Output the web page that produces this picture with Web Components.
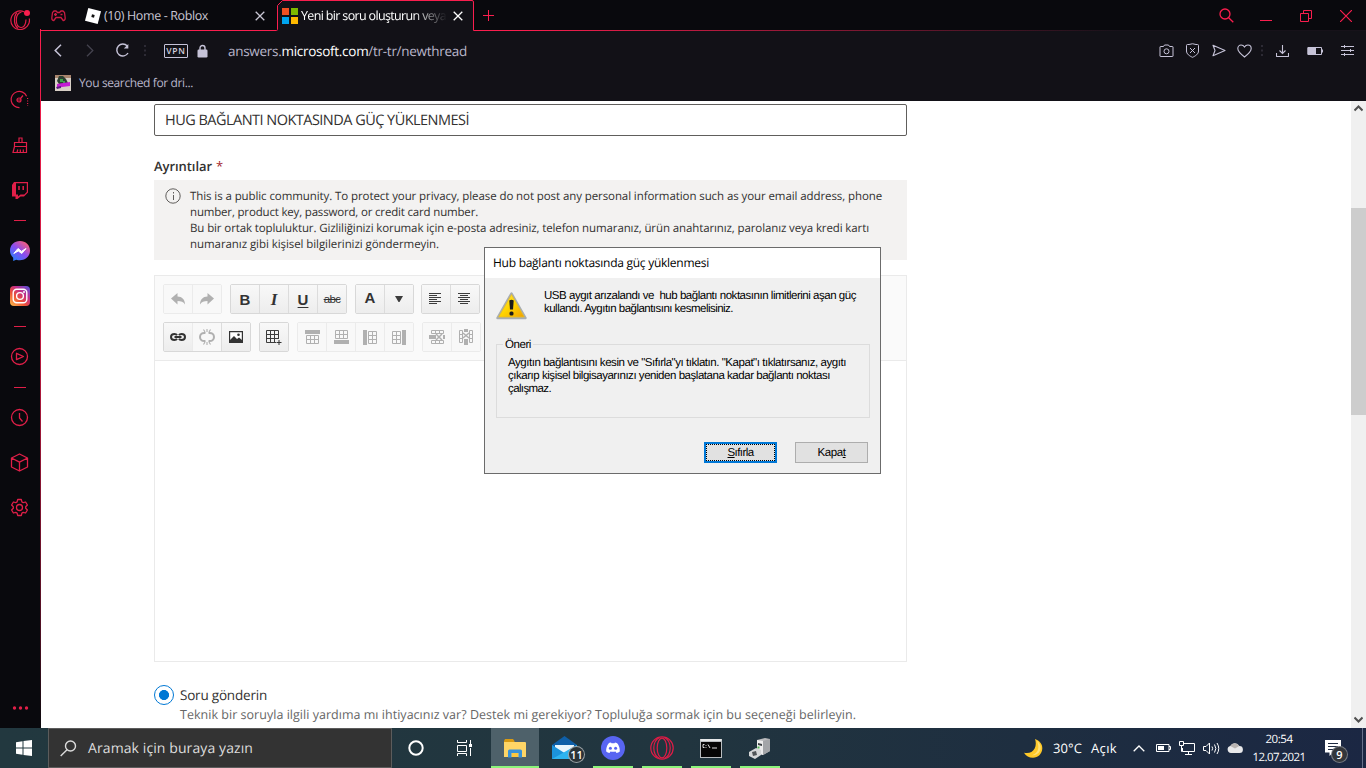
<!DOCTYPE html>
<html lang="tr">
<head>
<meta charset="utf-8">
<title>Yeni bir soru oluşturun</title>
<style>
    html, body { margin: 0; height: 100%; overflow: hidden; }
    body { font-family: "Open Sans", "Noto Sans", sans-serif; background: #fff; }
    desktop-screen { height: 768px; width: 1366px; }
</style>
</head>
<body>
<desktop-screen></desktop-screen>

<script>
// name: [width, height, markup]
const ICONS = {
    opera: [20, 20, '<g fill="none" stroke="#e01f48" stroke-width="1.2"><path d="M14 1.8A9.3 9.3 0 1 0 19.3 8.500"/><path d="M11.500 2C7.500 3 6.300 6.500 6.300 10s1.500 7 4.500 7.500c3 .3 5-2.500 5.200-8M7 2.500C4.500 5 4.300 8 4.500 11.500c.3 3.500 1.500 5.500 3.500 7"/></g><circle cx="17" cy="3" r="3" fill="#fa1e4e"/>'],
    speed: [19, 19, '<g fill="none" stroke="#e01f48" stroke-width="1.2"><path d="M16.600 6.200A8.100 8.100 0 1 0 9.500 17.600"/><path d="M17.600 8v8" stroke-dasharray="1 1.500"/><circle cx="9" cy="10" r="2"/><path d="M10.500 8.500 13 5.500M7 10h4"/></g>'],
    broom: [17, 17, '<g fill="none" stroke="#e01f48" stroke-width="1.2"><path d="M7 5V1h3v4M2.500 5.500h12v4h-12zM2.500 9.500 1 15.500h13.500v-6M5 15.500l.8-3M8.300 15.500v-3M11.300 15.500v-3"/></g>'],
    twitch: [18, 18, '<path d="M3 1h14v10.500L13 15.500H9.500L6.500 18H4.500v-2.500H1V4z" fill="#e01f48"/><path d="M5 2.200h10.800V11l-2.500 2.500H9.500L7 15.500v-2H5z" fill="#09090d"/><path d="M8 5v4M12.200 5v4" stroke="#e01f48" stroke-width="1.500"/>'],
    messenger: [20, 20, '<defs><linearGradient id="g" x1="0" y1="1" x2=".8" y2="0"><stop stop-color="#138bff"/><stop offset=".55" stop-color="#8a4cf0"/><stop offset="1" stop-color="#ff5f73"/></linearGradient></defs><path d="M10 0C4.300 0 0 4 0 9.600c0 2.900 1.200 5.400 3.200 7.100V20l3-1.300c1.200.4 2.500.5 3.800.5 5.700 0 10-4 10-9.600S15.700 0 10 0z" fill="url(#g)"/><path d="M3.800 12.500 8 7.500l3.500 2.800L16 7.500 11.800 12.500 8.300 10z" fill="#fff" stroke="#fff" stroke-linejoin="round"/>'],
    instagram: [20, 20, '<defs><linearGradient id="g" x1="0" y1="1" x2=".9" y2="0"><stop stop-color="#fdc04c"/><stop offset=".4" stop-color="#ee5136"/><stop offset=".68" stop-color="#c22e8b"/><stop offset="1" stop-color="#5b51d8"/></linearGradient></defs><rect width="20" height="20" rx="4" fill="url(#g)"/><g fill="none" stroke="#fff" stroke-width="1.400"><rect x="3.200" y="3.200" width="13.600" height="13.600" rx="3.500"/><circle cx="10" cy="10" r="3.400"/></g><circle cx="14" cy="6" r="1" fill="#fff"/>'],
    play: [19, 19, '<g fill="none" stroke="#e01f48" stroke-width="1.3" stroke-linejoin="round"><circle cx="9.500" cy="9.500" r="8"/><path d="M6.500 6.300v6.400l7-3.200z"/></g>'],
    clock: [19, 19, '<g fill="none" stroke="#e01f48" stroke-width="1.3"><circle cx="9.500" cy="9.500" r="8"/><path d="M9.500 5v5l3 3.500"/></g>'],
    cube: [19, 19, '<path d="M9.500 1 17.500 5v9L9.500 18 1.500 14V5zM1.500 5l8 4.200 8-4.200M9.500 9.200V18" fill="none" stroke="#e01f48" stroke-width="1.3" stroke-linejoin="round"/>'],
    gear: [19, 19, '<g fill="none" stroke="#e01f48" stroke-width="1.3" stroke-linejoin="round"><path d="M7.700 1.500h3.600l.6 2.400 1.300.8 2.400-.7 1.800 3-1.700 1.700v1.600l1.700 1.700-1.800 3-2.400-.7-1.300.8-.6 2.400H7.700l-.6-2.400-1.300-.8-2.400.7-1.800-3 1.700-1.700V8.700L1.600 7l1.800-3 2.400.7 1.300-.8z"/><circle cx="9.500" cy="9.500" r="3"/></g>'],
    more: [17, 4, '<g fill="#e01f48"><circle cx="2.500" cy="2" r="1.700"/><circle cx="8.500" cy="2" r="1.700"/><circle cx="14.500" cy="2" r="1.700"/></g>'],
    dash: [12, 1, '<path d="M0 .5h12" stroke="#e01f48"/>'],
    gamepad: [15, 12, '<g fill="none" stroke="#c91c43" stroke-width="1.3"><path d="M3 1h2l1.500 1.500h2L10 1h2l1.500 1.500.7 5.500c0 1.500-.7 2.500-2 2.500L10 7.500H5L2.800 10.500C1.500 10.500.8 9.500.8 8l.7-5.500z"/><path d="M3 4.500h3M4.500 3v3M9.500 4.500h2"/></g>'],
    roblox: [16, 16, '<path d="M3.300 0 16 3.300 12.700 16 0 12.700z" fill="#fff"/><path d="m7 6.300 2.700.7-.7 2.700-2.700-.7z" fill="#111"/>'],
    close: [10, 10, '<path d="M.7.7 9.300 9.300M9.300.7.7 9.300" stroke="currentColor" stroke-width="1.3"/>'],
    msflag: [16, 16, '<path d="M0 0h7v7H0z" fill="#f25022"/><path d="M9 0h7v7H9z" fill="#7fba00"/><path d="M0 9h7v7H0z" fill="#00a4ef"/><path d="M9 9h7v7H9z" fill="#ffb900"/>'],
    plus: [11, 11, '<path d="M5.500 0v11M0 5.500h11" stroke="#fa1e4e"/>'],
    search: [15, 15, '<g fill="none" stroke="#fa1e4e" stroke-width="1.3"><circle cx="6" cy="6" r="5"/><path d="m9.700 9.700 4.600 4.600"/></g>'],
    minimize: [12, 12, '<path d="M0 10.500h12" stroke="#fa1e4e"/>'],
    restore: [12, 12, '<path d="M.5 3.500h8v8h-8zM3.500 3.500v-3h8v8h-3" fill="none" stroke="#fa1e4e"/>'],
    winclose: [12, 12, '<path d="m0 0 12 12M12 0 0 12" stroke="#fa1e4e" stroke-width="1.200"/>'],
    back: [8, 13, '<path d="M7 .7 1.200 6.500 7 12.300" fill="none" stroke="#c6c3d8" stroke-width="1.5"/>'],
    forward: [8, 13, '<path d="m1 .7 5.800 5.800L1 12.300" fill="none" stroke="#45434f" stroke-width="1.3"/>'],
    reload: [15, 15, '<path d="M12.300 3A6 6 0 1 0 13 10" fill="none" stroke="#c6c3d8" stroke-width="1.4"/><path d="M13.300 1v4.500H8.800z" fill="#c6c3d8"/>'],
    dots: [2, 11, '<path d="M0 0h2v2H0zM0 4.500h2v2H0zM0 9h2v2H0z" fill="#2d2b35"/>'],
    lock: [11, 14, '<path d="M3 6V4a2.500 2.500 0 0 1 5 0v2" fill="none" stroke="#c6c3d8" stroke-width="1.400"/><rect x=".5" y="5.500" width="10" height="8" rx="1.200" fill="#c6c3d8"/>'],
    camera: [15, 14, '<g fill="none" stroke="#c6c3d8"><path d="M1.500 2.500h3l1-1.500h4l1 1.500h3q.5 0 .5.5v9q0 .5-.5.500h-12q-.5 0-.5-.5V3q0-.5.5-.5z"/><circle cx="7.500" cy="7.300" r="2.500"/></g>'],
    shield: [13, 15, '<path d="M3 1.500Q6.500 0 10 1.500h1.500q1 0 1 1V8c0 3-3 5-6 6.300C3.500 13 .5 11 .5 8V2.500q0-1 1-1zM4 5l5 5M9 5l-5 5" fill="none" stroke="#c6c3d8"/>'],
    send: [14, 13, '<path d="M1 1.200 13 6.500 1 11.800l2-5.300z" fill="none" stroke="#c6c3d8" stroke-width="1.100" stroke-linejoin="round"/>'],
    heart: [15, 14, '<path d="M7.500 13C3.500 10 .8 7.500.8 4.600.8 2.500 2.200 1 4.100 1c1.600 0 2.700.8 3.400 2 .7-1.200 1.800-2 3.400-2 1.900 0 3.300 1.500 3.300 3.600 0 2.900-2.700 5.400-6.700 8.400z" fill="none" stroke="#c6c3d8" stroke-width="1.100"/>'],
    download: [13, 12, '<path d="M.5 8v3q0 .5.5.5h11q.5 0 .5-.5V8M6.500 0v8.500M3.500 5.500l3 3 3-3" fill="none" stroke="#c6c3d8" stroke-width="1.100"/>'],
    battery: [16, 8, '<path d="M1 .5h13.500v7H1z" fill="none" stroke="#c6c3d8"/><path d="M.5.5H9v7H.5zM14.500 2.500H16v3h-1.500z" fill="#c6c3d8"/>'],
    sliders: [13, 11, '<path d="M0 1.500h13M0 5.500h13M0 9.500h13M3.500 0v3M9.500 4v3M3.500 8v3" stroke="#c6c3d8"/>'],
    favicon: [16, 16, '<path d="M0 0h16v16H0z" fill="#d8cfc6"/><path d="M0 0h16v3H0z" fill="#a9856e"/><path d="M4 1h4l3 3 2 4-3 1H4L2 6z" fill="#2b3f31"/><path d="M5 4h3v3H5zM8 6h2v2H8z" fill="#3ea34a"/><path d="M2 9l6-1 7-1v4l-8 1-5 1z" fill="#c41cd4"/><path d="M1 12l5-1v2l-4 1z" fill="#5a1f7c"/>'],
    info: [16, 16, '<circle cx="8" cy="8" r="7.200" fill="none" stroke="#605e5c"/><path d="M8.500 7v5M8.500 4v1.500" stroke="#605e5c"/>'],
    undo: [14, 12, '<path d="M0 5.500 6.500 0v3.500C11 3.500 14 6.500 14 11.500c-1.500-2.700-4-3.500-7.500-3.500v3.500z" fill="#b0b0b0"/>'],
    redo: [14, 12, '<path d="M14 5.500 7.500 0v3.500C3 3.500 0 6.500 0 11.500 1.500 8.800 4 8 7.500 8v3.500z" fill="#b0b0b0"/>'],
    caret: [8, 6, '<path d="M0 0h8L4.500 6h-1z" fill="#3c3c3c"/>'],
    left: [14, 12, '<path d="M0 .5h12M0 2.500h8M0 4.500h12M0 6.500h8M0 8.500h12M0 10.500h8" stroke="#3c3c3c"/>'],
    center: [14, 12, '<path d="M0 .5h12M2 2.500h8M0 4.500h12M2 6.500h8M0 8.500h12M2 10.500h8" stroke="#3c3c3c"/>'],
    link: [16, 8, '<g fill="none" stroke="#333" stroke-width="2"><path d="M7 2.200C6.500 1.200 5.600 1 4.500 1 2.300 1 1 2.200 1 4s1.300 3 3.500 3c1.100 0 2-.3 2.500-1.200M9 2.200c.5-1 1.400-1.200 2.500-1.200C13.700 1 15 2.200 15 4s-1.300 3-3.500 3C10.400 7 9.500 6.700 9 5.800M4.500 4h7"/></g>'],
    unlink: [16, 16, '<g fill="none" stroke="#b0b0b0" stroke-width="2"><path d="M6.500 4C3 3.500 1 5 1 8s2 4.500 5.500 4M9.500 4C13 3.500 15 5 15 8s-2 4.500-5.500 4"/><path d="M8 0v3M4.500.5 6 3M11.500.5 10 3M8 16v-3M4.500 15.500 6 13M11.500 15.500 10 13" stroke-width="1.100"/></g>'],
    image: [14, 12, '<path d="M.6.600h12.800v10.800H.6z" fill="#fff" stroke="#333" stroke-width="1.200"/><path d="M1 9l4-4 3 3 2-1.500L13 9v2H1z" fill="#333"/><circle cx="9.500" cy="3.700" r="1.300" fill="#333"/>'],
    table: [16, 15, '<path d="M.5.500h12v12H.5zM.5 4.500h12M.5 8.500h12M4.500.500v12M8.500.500v12" fill="none" stroke="#3c3c3c"/><path d="M10 9h6v6h-6z" fill="#f0f0f0"/><path d="M13 10v5M10.500 12.500h5" stroke="#333"/>'],
    rowTop: [15, 14, '<path d="M0 0h15v4H0z" fill="#b0b0b0"/><path d="M1.500 5.500h12v8h-12zM1.500 9.500h12M5.500 5.500v8M9.500 5.500v8" fill="none" stroke="#b0b0b0"/>'],
    rowBottom: [15, 14, '<path d="M0 10h15v4H0z" fill="#b0b0b0"/><path d="M1.500.5h12v8h-12zM1.500 4.500h12M5.500.5v8M9.500.5v8" fill="none" stroke="#b0b0b0"/>'],
    colLeft: [14, 15, '<path d="M0 0h4v15H0z" fill="#b0b0b0"/><path d="M5.500 1.500h8v12h-8zM5.500 5.500h8M5.500 9.500h8M9.500 1.500v12" fill="none" stroke="#b0b0b0"/>'],
    colRight: [14, 15, '<path d="M10 0h4v15h-4z" fill="#b0b0b0"/><path d="M.5 1.500h8v12h-8zM.5 5.500h8M.5 9.500h8M4.500 1.500v12" fill="none" stroke="#b0b0b0"/>'],
    rowDelete: [16, 14, '<path d="M2.500.5h12v3h-12zM6.500.5v3M10.500.5v3M2.500 10.500h12v3h-12zM6.500 10.500v3M10.500 10.500v3" fill="none" stroke="#b0b0b0"/><path d="M0 5h7v4H0zM14 5h2v4h-2z" fill="#b0b0b0"/><path d="m7 4 6 6M13 4l-6 6" stroke="#b0b0b0" stroke-width="1.500"/>'],
    colDelete: [14, 16, '<path d="M.5 1.500h3v12h-3zM.5 5.500h3M.5 9.500h3M10.500 1.500h3v12h-3zM10.500 5.500h3M10.500 9.500h3" fill="none" stroke="#b0b0b0"/><path d="M5 0h4v3H5zM5 10h4v6H5z" fill="#b0b0b0"/><path d="m4 4 6 5M10 4 4 9" stroke="#b0b0b0" stroke-width="1.500"/>'],
    warning: [31, 29, '<defs><linearGradient id="g" x1="0" y1="0" x2="1" y2="1"><stop stop-color="#ffe94a"/><stop offset=".5" stop-color="#ffd400"/><stop offset="1" stop-color="#f0a000"/></linearGradient></defs><path d="M15.500 1.500 29.500 26H1.500z" fill="#aaa" stroke="#a8adb0" stroke-width="2.500" stroke-linejoin="round"/><path d="M15.500 2.500 28.300 25H2.700z" fill="url(#g)" stroke="#e6bd2a" stroke-width=".8"/><path d="M13.300 8.500q2.200-1.500 4.400 0L17 17.500h-3z" fill="#1a1a1a"/><rect x="13.500" y="19.500" width="4" height="4" rx="1.500" fill="#1a1a1a"/>'],
    windows: [16, 16, '<path d="M0 2.200 6.500 1.300v6.200H0zM7.500 1.100 16 0v7.500H7.500zM0 8.500h6.500v6.200L0 13.800zM7.500 8.500H16V16l-8.500-1.100z" fill="#fff"/>'],
    find: [17, 17, '<g fill="none" stroke="#dcdcdc" stroke-width="1.400"><circle cx="10.500" cy="6" r="5"/><path d="M7 9.700.7 16"/></g>'],
    cortana: [16, 16, '<circle cx="8" cy="8" r="6.700" fill="none" stroke="#fff" stroke-width="2"/>'],
    taskview: [17, 16, '<g fill="none" stroke="#fff"><path d="M1.500 0v2.500h9V0M1.500 5.500h9v6h-9zM1.500 16v-2.500h9V16M14.500 0v4M14.500 8v8"/></g><path d="M13 4h3v3h-3z" fill="#fff"/>'],
    folder: [22, 19, '<path d="M0 2 1 0h8l1.500 2v4H0z" fill="#d99a12"/><path d="M0 3h21q1 0 1 1v14H0z" fill="#ffd566"/><path d="M4 18.500V12q0-1.500 1.500-1.500h11Q18 10.500 18 12v6.500h-3.500V14h-7v4.500z" fill="#3a92d8"/><path d="M8 14h6v4H8z" fill="#ffc83d"/>'],
    mail: [25, 24, '<path d="M0 9 12.500 0 25 9v4H0z" fill="#0f5fa8"/><path d="M3 9h19v8H3z" fill="#e9f5fc"/><path d="M0 9v14h25V9l-12.500 8z" fill="#1c93dc"/><path d="M0 23 25 9v14z" fill="#2eb3f0"/>'],
    discord: [24, 24, '<circle cx="12" cy="12" r="12" fill="#5865f2"/><path d="M8.500 6.800 10 6.500l.5.8h3l.5-.8 1.700.4c1.800 1.200 3.300 5 3.100 8.500-1 .9-2 1.400-3.300 1.700l-1-1.500c-1.500.3-3.500.3-5 0l-1 1.500c-1.300-.3-2.300-.8-3.300-1.700-.2-3.500 1.300-7.300 3.300-8.600z" fill="#fff"/><circle cx="9.400" cy="12.300" r="1.500" fill="#5865f2"/><circle cx="14.600" cy="12.300" r="1.500" fill="#5865f2"/>'],
    operaTask: [24, 24, '<g fill="none" stroke="#df1c46" stroke-width="1.200"><circle cx="12" cy="12" r="11.200"/><ellipse cx="12" cy="12" rx="4.800" ry="9.800"/><path d="M9.500 1.500C5.500 3.500 3.800 8 3.800 12s1.700 8.500 5.700 10.500M14.500 1.500c4 2 5.700 6.500 5.700 10.500s-1.700 8.500-5.700 10.500"/></g>'],
    cmd: [22, 19, '<path d="M0 0h22v19H0z" fill="#b9bdc0"/><path d="M.5 0h21v2H.5z" fill="#e6e8e9"/><path d="M1 3h20v15H1z" fill="#060606"/><path d="M4.500 5.500H3v3h1.500M6 6v.8M6 8v.8M8 5.500l2 3.500M12 9h5" fill="none" stroke="#ddd"/>'],
    usb: [23, 21, '<path d="M9 2 17 0l5 1v12l-7 4-6-2z" fill="#b9babc"/><path d="m9 2 6 1v14l-6-2z" fill="#ececec"/><path d="m15 3 7-2v12l-7 4z" fill="#a3a5a8"/><path d="M10 5l4 1v2l-4-1z" fill="#3c4043"/><path d="m1 14 7-4 5 2v5l-6 4-6-3z" fill="#d5d6d7"/><path d="m4 14 4-1 1 4-4 1z" fill="#505457"/><path d="M9.500 8.500h2v2h-2z" fill="#4eb54e"/>'],
    moon: [19, 19, '<path d="M11 0c4.500 1.500 7.500 5 7.300 9.500C18 15 14 18.800 9 18.800c-4 0-7-1.500-9-5 5 1 8.500-.5 10.500-4C12.300 6.500 12 3 11 0z" fill="#ffc928"/><path d="M12.500 1.500c3 2 4.500 5 4 8.500-.7 4-4.500 6.700-8.500 6.300 4-1.300 6-4 6.300-7.500.2-2.700-.5-5.300-1.800-7.300z" fill="#ffe27a"/>'],
    up: [12, 7, '<path d="m.7 6.300 5.300-5.300 5.300 5.300" fill="none" stroke="#fff" stroke-width="1.300"/>'],
    trayBattery: [15, 8, '<path d="M.5.500h12.500v7H.5zM13 2.500h1.500v3H13" fill="none" stroke="#fff"/><path d="M2 2h6v4H2z" fill="#fff"/>'],
    network: [16, 14, '<path d="M5 2.500h10.500v8H3.500V7M6 13.500h7M9.500 10.500v3M.5.500h4v4h-4zM2.500 4.500v6h1" fill="none" stroke="#fff"/>'],
    volume: [17, 13, '<g fill="none" stroke="#fff"><path d="M.5 4.500H3L6.500 1v11L3 8.500H.5zM9 4.500q1.300 2 0 4M11.500 2.500q2.700 4 0 8M14 1q3.500 5.500 0 11"/></g>'],
    cloud: [16, 10, '<path d="M4 10a3.500 3.500 0 0 1-.7-6.900A5 5 0 0 1 12.300 3 3.500 3.500 0 0 1 12.500 10z" fill="#e8e8ea"/><path d="M3.300 3.100A5 5 0 0 1 12.300 3L8 5.500z" fill="#b9b4b2"/>'],
    action: [16, 16, '<path d="M0 0h16v12.500H8L4.500 16v-3.500H0z" fill="#fff"/><path d="M3 3.500h10M3 6.500h10M3 9.500h6" stroke="#1f2b42"/>'],
    scrollUp: [9, 7, '<path d="M.5 5.500 4.500 1.500l4 4" fill="none" stroke="#505050" stroke-width="2"/>'],
    scrollDown: [9, 7, '<path d="m.5 1.500 4 4 4-4" fill="none" stroke="#505050" stroke-width="2"/>'],
};

class UiIcon extends HTMLElement {
    connectedCallback() {
        const [w, h, body] = ICONS[this.getAttribute('name')];
        const root = this.shadowRoot || this.attachShadow({ mode: 'open' });
        root.innerHTML = `
            <style>:host { display: block; flex: none; width: ${w}px; height: ${h}px; } svg { display: block; }</style>
            <svg width="${w}" height="${h}" viewBox="0 0 ${w} ${h}">${body}</svg>
        `;
    }
}
customElements.define('ui-icon', UiIcon);

// One line of text, tracked so that it fills the given width
class TextLine extends HTMLElement {
    connectedCallback() {
        const root = this.shadowRoot || this.attachShadow({ mode: 'open' });
        root.innerHTML = `
            <style>
                :host { display: block; flex: none; text-rendering: geometricPrecision; }
                span { display: inline-block; white-space: pre; vertical-align: top; }
            </style>
            <span><slot></slot></span>
        `;
        const width = Number(this.getAttribute('width'));
        if (!width) return;
        const natural = root.querySelector('span').getBoundingClientRect().width;
        this.style.letterSpacing = ((width - natural) / this.textContent.length).toFixed(3) + 'px';
        this.style.width = width + 'px';
    }
}
customElements.define('text-line', TextLine);

function define(name, html) {
    customElements.define(name, class extends HTMLElement {
        connectedCallback() {
            if (this.shadowRoot) return;
            this.attachShadow({ mode: 'open' }).innerHTML = html;
        }
    });
}

const icon = (name, margin = 0) => `<ui-icon name="${name}" style="margin-left:${margin}px"></ui-icon>`;

define('side-bar', `
    <style>
        :host {
            display: grid;
            grid-template-rows: 40px 37px 45px 47px 42px 18px 44px 45px 16px 45px 16px 45px 44px 47px 157px 40px;
            justify-items: center;
            align-items: center;
            box-sizing: border-box;
            width: 41px;
            padding-right: 1px;
            background: #09090d;
            border-right: 1px solid;
            border-image: linear-gradient(#09090d 30px, #fa1e4e 30px, #c31a41 330px, #4a1022 640px, #09090d) 1;
        }
    </style>
    ${icon('opera', 1)}<span></span>${icon('speed')}${icon('broom', 1)}${icon('twitch', 1)}${icon('dash', 1)}
    ${icon('messenger', 1)}${icon('instagram', 1)}${icon('dash', 1)}${icon('play')}${icon('dash', 1)}
    ${icon('clock')}${icon('cube')}${icon('gear')}<span></span>${icon('more', 2)}
`);

define('tab-bar', `
    <style>
        :host { display: flex; align-items: center; height: 31px; background: #09090d; position: relative; font-size: 12.5px; color: #c9c7d4; }
        .outline { position: absolute; left: 0; top: 0; }
        .tab { display: flex; align-items: center; position: relative; height: 31px; }
        .active { width: 197px; margin-left: 11px; color: #fff; }
        .active text-line { -webkit-mask: linear-gradient(90deg, #000 112px, transparent 146px); }
        .window { display: flex; align-items: center; margin-left: auto; margin-right: 14px; }
        ui-icon { position: relative; }
    </style>
    <svg class="outline" width="1325" height="31">
        <defs><linearGradient id="fade" gradientUnits="userSpaceOnUse" x1="480" y1="0" x2="1080" y2="0"><stop stop-color="#fa1e4e"/><stop offset="1" stop-color="#17121a"/></linearGradient></defs>
        <path d="M236.500 31V5.500l5-5h190.500V31z" fill="#121117"/>
        <path d="M0 30.500h235.500q1 0 1-1V5.500l5-5H431q1.500 0 1.500 1.500v28.500H1325" fill="none" stroke="url(#fade)"/>
    </svg>
    <div class="tab">
        ${icon('gamepad', 10)}${icon('roblox', 19)}
        <text-line width="104" style="margin-left:3px">(10) Home - Roblox</text-line>
        ${icon('close', 47)}
    </div>
    <div class="tab active">
        ${icon('msflag', 6)}
        <text-line width="145" style="margin-left:3px">Yeni bir soru oluşturun veya</text-line>
        ${icon('close', 7)}
    </div>
    ${icon('plus', 10)}
    <div class="window">${icon('search')}${icon('minimize', 26)}${icon('restore', 28)}${icon('winclose', 28)}</div>
`);

define('address-bar', `
    <style>
        :host { display: flex; align-items: center; height: 39px; background: #121117; color: #b9b6ca; font-size: 13.5px; }
        b { font-weight: 400; color: #fff; }
        .vpn { box-sizing: border-box; width: 24px; height: 14px; margin-left: 18px; border: 1px solid #c6c3d8; border-radius: 1px; font: 600 8.5px/12px "Open Sans", sans-serif; display: flex; justify-content: center; color: #d2d0df; letter-spacing: .7px; }
        .actions { display: flex; align-items: center; margin-left: auto; margin-right: 12px; }
    </style>
    ${icon('back', 13)}${icon('forward', 24)}${icon('reload', 21)}${icon('dots', 14)}
    <span class="vpn">VPN</span>
    ${icon('lock', 9)}
    <text-line width="239" style="margin-left:20px">answers.<b>microsoft.com</b>/tr-tr/newthread</text-line>
    <div class="actions">
        ${icon('camera')}${icon('shield', 12)}${icon('send', 13)}${icon('heart', 11)}${icon('dots', 9)}
        ${icon('download', 13)}${icon('battery', 18)}${icon('sliders', 18)}
    </div>
`);

define('bookmarks-bar', `
    <style>
        :host { display: flex; align-items: center; height: 31px; padding-bottom: 5px; box-sizing: border-box; background: #121117; color: #b9b6ca; font-size: 12px; padding-left: 14px; }
        text-line { padding-bottom: 2px; }
    </style>
    ${icon('favicon')}
    <text-line width="114" style="margin-left:8px">You searched for dri...</text-line>
`);

// Buttons of the editor; slotted content is either an icon or a letter
define('tool-button', `
    <style>
        :host { display: flex; align-items: center; justify-content: center; box-sizing: border-box; width: 29px; height: 28px; background: linear-gradient(#f8f8f8, #ededed); color: #333; font: 700 15px/1 "Liberation Sans", sans-serif; }
        :host(:first-child) { width: 28px; }
        :host(:not(:first-child)) { border-left: 1px solid #dcdcdc; }
        :host([off]) { background: #f8f8f8; border-color: #ebebeb; }
        ::slotted(ui-icon) { margin: 0 !important; }
    </style>
    <slot></slot>
`);

define('tool-group', `
    <style>
        :host { display: flex; box-sizing: border-box; height: 30px; border: 1px solid #d8d8d8; border-radius: 2px; flex: none; }
        :host([off]) { border-color: #ebebeb; }
    </style>
    <slot></slot>
`);

const tool = (name, off = '') => `<tool-button ${off}>${icon(name)}</tool-button>`;

define('rich-editor', `
    <style>
        :host { display: block; box-sizing: border-box; height: 387px; border: 1px solid #eaeaea; }
        .bar { display: grid; gap: 8px; align-content: start; height: 76px; padding: 8px 8px 0; background: #fafafa; border-bottom: 1px solid #eaeaea; }
        .row { display: flex; gap: 8px; }
        .strike { font: 11.5px "Liberation Sans"; text-decoration: line-through; letter-spacing: -.6px; }
        i { font-family: "Liberation Serif", serif; font-size: 17px; }
        u { text-decoration-thickness: 1px; text-underline-offset: 2px; }
        .up { padding-bottom: 3px; }
        .colour { margin-right: -1px; }
    </style>
    <div class="bar">
        <div class="row">
            <tool-group off>${tool('undo', 'off')}${tool('redo', 'off')}</tool-group>
            <tool-group><tool-button>B</tool-button><tool-button><i>I</i></tool-button><tool-button><u>U</u></tool-button><tool-button><span class="strike">abc</span></tool-button></tool-group>
            <tool-group class="colour"><tool-button><span class="up">A</span></tool-button>${tool('caret')}</tool-group>
            <tool-group>${tool('left')}${tool('center')}</tool-group>
        </div>
        <div class="row">
            <tool-group>${tool('link')}${tool('unlink', 'off')}${tool('image')}</tool-group>
            <tool-group>${tool('table')}</tool-group>
            <tool-group off>${tool('rowTop', 'off')}${tool('rowBottom', 'off')}${tool('colLeft', 'off')}${tool('colRight', 'off')}</tool-group>
            <tool-group off>${tool('rowDelete', 'off')}${tool('colDelete', 'off')}</tool-group>
        </div>
    </div>
`);

define('info-note', `
    <style>
        :host { display: flex; box-sizing: border-box; height: 80px; background: #f3f2f1; padding: 8px 12px 0 11px; color: #323130; font-size: 11.5px; line-height: 16px; }
        div { margin: 1px 0 0 9px; }
    </style>
    ${icon('info')}
    <div>
        <text-line width="692">This is a public community. To protect your privacy, please do not post any personal information such as your email address, phone</text-line>
        <text-line width="288">number, product key, password, or credit card number.</text-line>
        <text-line width="679">Bu bir ortak topluluktur. Gizliliğinizi korumak için e-posta adresiniz, telefon numaranız, ürün anahtarınız, parolanız veya kredi kartı</text-line>
        <text-line width="249">numaranız gibi kişisel bilgilerinizi göndermeyin.</text-line>
    </div>
`);

define('question-form', `
    <style>
        :host { display: block; width: 753px; margin-left: 113px; padding-top: 3px; color: #323130; }
        .title { box-sizing: border-box; height: 32px; border: 1px solid #605e5c; border-radius: 2px; padding: 1px 0 0 10px; font-size: 14.5px; line-height: 30px; }
        .label { display: flex; margin-top: 20px; height: 24px; line-height: 20px; font-size: 13px; font-weight: 600; }
        .label span { color: #a4262c; margin-left: 4px; font-weight: 400; }
        rich-editor { margin-top: 15px; }
        .choice { display: grid; grid-template-columns: 20px 1fr; column-gap: 6px; margin-top: 23px; line-height: 20px; font-size: 13.5px; }
        .radio { box-sizing: border-box; width: 20px; height: 20px; border: 1px solid #0078d4; border-radius: 50%; background: radial-gradient(circle, #0078d4 4.700px, #fff 5.300px); }
        .hint { grid-column: 2; color: #666; font-size: 12.500px; line-height: 19px; }
    </style>
    <div class="title"><text-line width="304">HUG BAĞLANTI NOKTASINDA GÜÇ YÜKLENMESİ</text-line></div>
    <div class="label"><text-line width="58">Ayrıntılar</text-line><span>*</span></div>
    <info-note></info-note>
    <rich-editor></rich-editor>
    <div class="choice">
        <div class="radio"></div>
        <text-line width="87">Soru gönderin</text-line>
        <text-line class="hint" width="676">Teknik bir soruyla ilgili yardıma mı ihtiyacınız var? Destek mi gerekiyor? Topluluğa sormak için bu seçeneği belirleyin.</text-line>
    </div>
`);

define('scroll-bar', `
    <style>
        :host { display: grid; grid-template-rows: 15px 92px 207px 1fr 17px; justify-items: center; align-items: center; width: 15px; background: #f0f0f0; }
        .thumb { grid-row: 3; width: 15px; height: 207px; background: #cdcdcd; }
        .end { grid-row: 5; }
    </style>
    ${icon('scrollUp')}<div class="thumb"></div><div class="end">${icon('scrollDown')}</div>
`);

define('dialog-button', `
    <style>
        :host { display: flex; justify-content: center; align-items: center; box-sizing: border-box; width: 73px; height: 21px; padding-top: 2px; background: #e1e1e1; border: 1px solid #adadad; }
        :host([focused]) { border: 2px solid #0078d7; outline: 1px dotted #000; outline-offset: -3px; }
    </style>
    <slot></slot>
`);

define('hub-dialog', `
    <style>
        :host { display: block; box-sizing: border-box; width: 397px; height: 227px; border: 1px solid #6b6b6b; background: #f0f0f0; color: #000; font: 11.5px/13px "Liberation Sans", sans-serif; }
        header { height: 30px; background: #fff; padding-left: 8px; font: 12px/29px "Open Sans", sans-serif; }
        .message { display: flex; box-sizing: border-box; padding: 12px 0 0 11px; height: 60px; }
        .message ui-icon { margin-top: 2px; }
        .message div { margin-left: 17px; }
        fieldset { margin: 0 0 0 11px; padding: 6px 0 0 11px; width: 374px; height: 80px; box-sizing: border-box; border: 1px solid #dcdcdc; }
        legend { padding: 0 2px; margin-left: -5px; }
        legend text-line { position: relative; top: 1px; }
        footer { display: flex; gap: 18px; margin: 24px 0 0 219px; }
    </style>
    <header><text-line width="216">Hub bağlantı noktasında güç yüklenmesi</text-line></header>
    <div class="message">
        ${icon('warning')}
        <div>
            <text-line width="312">USB aygıt arızalandı ve  hub bağlantı noktasının limitlerini aşan güç</text-line>
            <text-line width="189">kullandı. Aygıtın bağlantısını kesmelisiniz.</text-line>
        </div>
    </div>
    <fieldset>
        <legend><text-line width="26">Öneri</text-line></legend>
        <text-line width="338">Aygıtın bağlantısını kesin ve "Sıfırla"yı tıklatın. "Kapat"ı tıklatırsanız, aygıtı</text-line>
        <text-line width="322">çıkarıp kişisel bilgisayarınızı yeniden başlatana kadar bağlantı noktası</text-line>
        <text-line width="43">çalışmaz.</text-line>
    </fieldset>
    <footer>
        <dialog-button focused><text-line width="26"><u>S</u>ıfırla</text-line></dialog-button>
        <dialog-button><text-line width="28">Kapa<u>t</u></text-line></dialog-button>
    </footer>
`);

define('task-button', `
    <style>
        :host { position: relative; display: flex; flex: none; align-items: center; justify-content: center; box-sizing: border-box; width: 49px; height: 40px; }
        :host([running]) { padding-right: 2px; }
        :host([running])::after { content: ""; position: absolute; left: 4px; right: 5px; bottom: 0; height: 2px; background: #8cf47b; }
        :host([current]) { background: #4e616a; padding-right: 0; }
        :host([current])::after { left: 0; right: 0; }
        ::slotted(ui-icon) { margin: 0 !important; }
        ::slotted(.badge) { position: absolute; left: 29px; top: 19px; width: 15px; height: 15px; border-radius: 50%; background: #2b3438; box-shadow: 0 0 0 1px #9aa2a6; color: #fff; font: 600 11px/15px "Open Sans"; text-align: center; }
    </style>
    <slot></slot>
`);

define('task-bar', `
    <style>
        :host { display: flex; align-items: center; height: 40px; background: linear-gradient(90deg, #22383f, #21353f 50%, #1e2e40 75%, #1b2743); color: #fff; font-size: 14px; }
        .start { display: flex; width: 32px; padding-left: 16px; }
        .search { display: flex; align-items: center; box-sizing: border-box; width: 344px; height: 40px; border: 1px solid #5c5c5c; background: #333; color: #dedede; margin-right: 1px; }
        .pinned { display: flex; }
        .pinned > [current] { width: 48px; margin-right: 1px; }
        .tray { display: flex; align-items: center; height: 40px; margin-left: auto; font-size: 13px; }
        .clock { display: grid; justify-items: center; width: 54px; margin-left: 9px; padding-top: 1px; font-size: 11.5px; line-height: 18px; }
        .notices { position: relative; margin-left: 19px; }
        .notices span { position: absolute; left: 7px; top: 7px; width: 15px; height: 15px; border-radius: 50%; background: #33363b; box-shadow: 0 0 0 1px #777b82; font: 600 11px/15px "Open Sans"; text-align: center; }
        .peek { width: 3px; height: 40px; margin-left: 21px; border-left: 1px solid #66708a; }
    </style>
    <div class="start">${icon('windows')}</div>
    <div class="search">${icon('find', 11)}<text-line width="165" style="margin-left:11px">Aramak için buraya yazın</text-line></div>
    <div class="pinned">
        <task-button style="width:46px">${icon('cortana')}</task-button>
        <task-button style="width:51px">${icon('taskview')}</task-button>
        <task-button running current style="margin-left:1px">${icon('folder')}</task-button>
        <task-button>${icon('mail')}<span class="badge">11</span></task-button>
        <task-button running>${icon('discord')}</task-button>
        <task-button running>${icon('operaTask')}</task-button>
        <task-button running>${icon('cmd')}</task-button>
        <task-button running>${icon('usb')}</task-button>
    </div>
    <div class="tray">
        ${icon('moon')}
        <text-line width="29" style="margin-left:10px">30°C</text-line>
        <text-line width="26" style="margin-left:9px">Açık</text-line>
        ${icon('up', 16)}${icon('trayBattery', 11)}${icon('network', 8)}${icon('volume', 8)}${icon('cloud', 7)}
        <div class="clock"><text-line width="27">20:54</text-line><text-line width="53">12.07.2021</text-line></div>
        <div class="notices">${icon('action')}<span>9</span></div>
        <div class="peek"></div>
    </div>
`);

define('desktop-screen', `
    <style>
        :host { display: grid; grid-template-rows: 728px 40px; position: relative; overflow: hidden; }
        .browser { display: grid; grid-template-columns: 41px 1fr; min-height: 0; }
        .window { display: flex; flex-direction: column; min-width: 0; min-height: 0; }
        .page { display: flex; justify-content: space-between; flex: 1; min-height: 0; overflow: hidden; background: #fff; }
        hub-dialog { position: absolute; left: 484px; top: 247px; }
    </style>
    <div class="browser">
        <side-bar></side-bar>
        <div class="window">
            <tab-bar></tab-bar>
            <address-bar></address-bar>
            <bookmarks-bar></bookmarks-bar>
            <div class="page">
                <question-form></question-form>
                <scroll-bar></scroll-bar>
            </div>
        </div>
    </div>
    <task-bar></task-bar>
    <hub-dialog></hub-dialog>
`);
</script>
</body>
</html>
